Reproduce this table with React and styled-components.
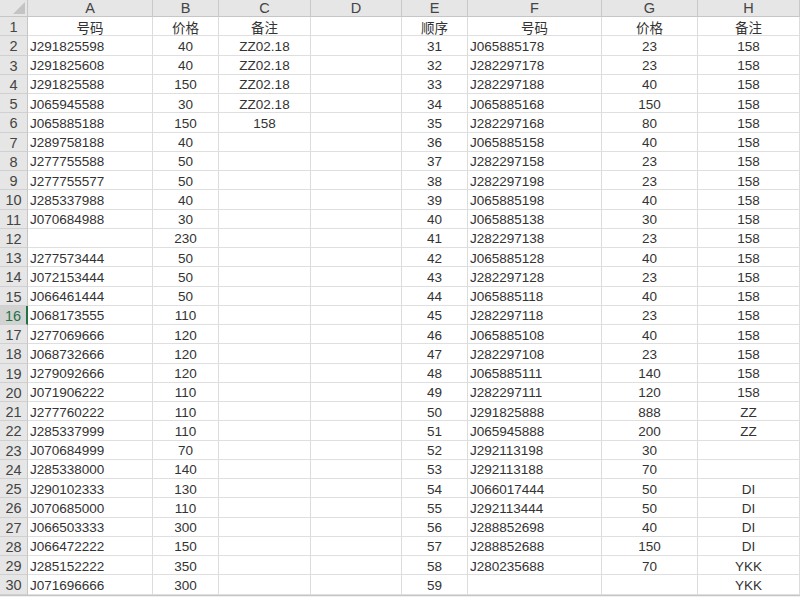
import React from 'react';
import styled, { createGlobalStyle } from 'styled-components';

const GlobalStyle = createGlobalStyle`
    html, body {
        margin: 0;
        padding: 0;
        background: #fff;
        overflow: hidden;
    }
    body {
        font-family: "Liberation Sans", "Noto Sans CJK SC", sans-serif;
    }
`;

const COLS = ['A', 'B', 'C', 'D', 'E', 'F', 'G', 'H'];
const WIDTHS = [28, 125, 66, 92, 91, 66, 134, 96, 102];
const ALIGN = ['left', 'center', 'center', 'center', 'center', 'left', 'center', 'center'];

const ROWS = [
    ['号码', '价格', '备注', '', '顺序', '号码', '价格', '备注'],
    ['J291825598', '40', 'ZZ02.18', '', '31', 'J065885178', '23', '158'],
    ['J291825608', '40', 'ZZ02.18', '', '32', 'J282297178', '23', '158'],
    ['J291825588', '150', 'ZZ02.18', '', '33', 'J282297188', '40', '158'],
    ['J065945588', '30', 'ZZ02.18', '', '34', 'J065885168', '150', '158'],
    ['J065885188', '150', '158', '', '35', 'J282297168', '80', '158'],
    ['J289758188', '40', '', '', '36', 'J065885158', '40', '158'],
    ['J277755588', '50', '', '', '37', 'J282297158', '23', '158'],
    ['J277755577', '50', '', '', '38', 'J282297198', '23', '158'],
    ['J285337988', '40', '', '', '39', 'J065885198', '40', '158'],
    ['J070684988', '30', '', '', '40', 'J065885138', '30', '158'],
    ['', '230', '', '', '41', 'J282297138', '23', '158'],
    ['J277573444', '50', '', '', '42', 'J065885128', '40', '158'],
    ['J072153444', '50', '', '', '43', 'J282297128', '23', '158'],
    ['J066461444', '50', '', '', '44', 'J065885118', '40', '158'],
    ['J068173555', '110', '', '', '45', 'J282297118', '23', '158'],
    ['J277069666', '120', '', '', '46', 'J065885108', '40', '158'],
    ['J068732666', '120', '', '', '47', 'J282297108', '23', '158'],
    ['J279092666', '120', '', '', '48', 'J065885111', '140', '158'],
    ['J071906222', '110', '', '', '49', 'J282297111', '120', '158'],
    ['J277760222', '110', '', '', '50', 'J291825888', '888', 'ZZ'],
    ['J285337999', '110', '', '', '51', 'J065945888', '200', 'ZZ'],
    ['J070684999', '70', '', '', '52', 'J292113198', '30', ''],
    ['J285338000', '140', '', '', '53', 'J292113188', '70', ''],
    ['J290102333', '130', '', '', '54', 'J066017444', '50', 'DI'],
    ['J070685000', '110', '', '', '55', 'J292113444', '50', 'DI'],
    ['J066503333', '300', '', '', '56', 'J288852698', '40', 'DI'],
    ['J066472222', '150', '', '', '57', 'J288852688', '150', 'DI'],
    ['J285152222', '350', '', '', '58', 'J280235688', '70', 'YKK'],
    ['J071696666', '300', '', '', '59', '', '', 'YKK'],
];

const ACTIVE_ROW = 16;

const Sheet = styled.div`
    display: grid;
    grid-template-columns: ${WIDTHS.map((w) => `${w}px`).join(' ')};
    grid-template-rows: 17px repeat(30, 19.25px);
    width: 800px;
    color: #333;
    font-size: 13.5px;
`;

const Corner = styled.div`
    position: relative;
    background: #e6e6e6;
    border-right: 1px solid #c6c6c6;
    border-bottom: 1px solid #c6c6c6;
    box-sizing: border-box;
    &::after {
        content: '';
        position: absolute;
        right: 2px;
        bottom: 2px;
        border-style: solid;
        border-width: 0 0 12px 12px;
        border-color: transparent transparent #c4c4c4 transparent;
    }
`;

const ColHead = styled.div`
    display: flex;
    align-items: center;
    justify-content: center;
    background: #e6e6e6;
    color: #444;
    font-size: 14.5px;
    border-right: 1px solid #c9c9c9;
    border-bottom: 1px solid #c6c6c6;
    box-sizing: border-box;
    line-height: 1;
`;

const RowHead = styled.div`
    display: flex;
    align-items: center;
    justify-content: center;
    padding-top: 2px;
    background: ${(p) => (p.$active ? '#d2d2d2' : '#e6e6e6')};
    color: ${(p) => (p.$active ? '#217346' : '#444')};
    font-size: 14.5px;
    border-right: ${(p) => (p.$active ? '2px solid #217346' : '1px solid #c6c6c6')};
    border-bottom: 1px solid #d0d0d0;
    box-sizing: border-box;
`;

const Cell = styled.div`
    display: flex;
    align-items: center;
    justify-content: ${(p) => (p.$align === 'left' ? 'flex-start' : 'center')};
    padding: 2px 2px 0;
    border-right: 1px solid #dcdcdc;
    border-bottom: 1px solid #dfdfdf;
    box-sizing: border-box;
    white-space: nowrap;
    overflow: hidden;
`;

const BottomBar = styled.div`
    height: 3px;
    border-top: 1px solid #c6c6c6;
    background: #f0f0f0;
`;

export default function App() {
    return (
        <>
            <GlobalStyle />
            <Sheet>
                <Corner />
                {COLS.map((c) => (
                    <ColHead key={c}>{c}</ColHead>
                ))}
                {ROWS.map((row, i) => (
                    <React.Fragment key={i}>
                        <RowHead $active={i + 1 === ACTIVE_ROW}>{i + 1}</RowHead>
                        {row.map((v, j) => (
                            <Cell key={j} $align={i === 0 ? 'center' : ALIGN[j]}>
                                {v}
                            </Cell>
                        ))}
                    </React.Fragment>
                ))}
            </Sheet>
            <BottomBar />
        </>
    );
}
